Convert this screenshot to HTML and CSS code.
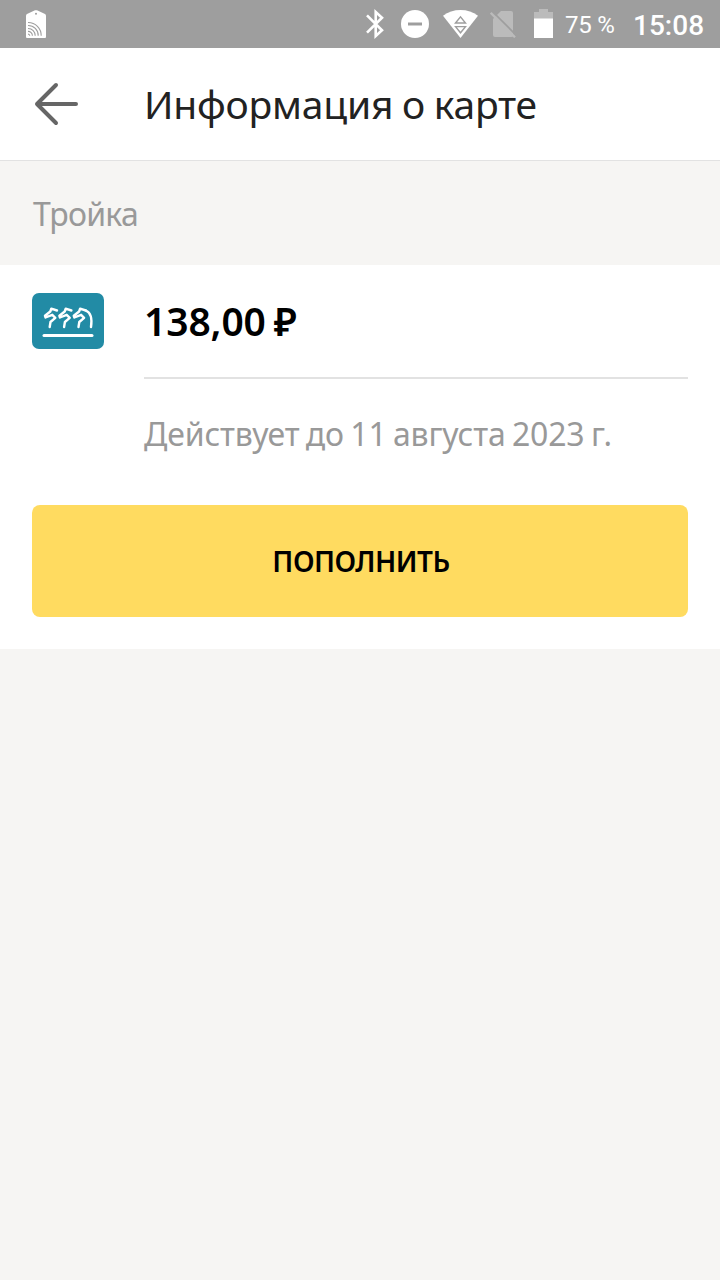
FILE: index.html
```html
<!DOCTYPE html>
<html lang="ru">
<head>
    <meta charset="UTF-8">
    <meta name="viewport" content="width=device-width, initial-scale=1">
    <title>Информация о карте</title>
    <link rel="stylesheet" href="styles.css">
</head>
<body>
<div class="statusbar">
    <svg class="icon-tag" width="20" height="28" viewBox="0 0 20 28">
        <path d="M0 5.5 Q0 4.5 1 4 L9 .3 Q10 0 11 .3 L19 4 Q20 4.5 20 5.5 V27 Q20 28 19 28 H1 Q0 28 0 27Z" fill="#fff"/>
        <circle cx="10" cy="3.8" r="1" fill="#9e9e9e"/>
        <g fill="none" stroke="#9e9e9e" stroke-width="1.1">
            <path d="M2 12.5 A13 13 0 0 1 15.2 25.8"/>
            <path d="M2 15.5 A10 10 0 0 1 12.2 25.8"/>
            <path d="M2 18.5 A7 7 0 0 1 9.2 25.8"/>
            <path d="M2 21.4 A4.3 4.3 0 0 1 6.4 25.8"/>
            <path d="M2 24 A2 2 0 0 1 3.8 25.8"/>
        </g>
    </svg>
    <div class="status-right">
        <svg class="icon-bt" width="20" height="30" viewBox="0 0 20 30">
            <path d="M2 6.3 L17 21.3 L10.7 27 V3 L17 8.7 L2 23.7" fill="none" stroke="#fff" stroke-width="2.6"/>
        </svg>
        <svg class="icon-dnd" width="28" height="28" viewBox="0 0 28 28">
            <circle cx="14" cy="14" r="14" fill="#fff"/>
            <path d="M7 14 H21" stroke="#9e9e9e" stroke-width="3"/>
        </svg>
        <svg class="icon-wifi" width="35" height="28" viewBox="0 0 35 28">
            <path d="M0 5.8 Q7.5 0 17.5 0 T35 5.8 L17.5 28Z" fill="#fff"/>
            <path d="M12.5 13 L17.5 6.8 L22.5 13Z M12.5 16.6 L17.5 22.8 L22.5 16.6Z" fill="none" stroke="#9e9e9e" stroke-width="1.4"/>
        </svg>
        <svg class="icon-sim" width="26" height="28" viewBox="0 0 26 28">
            <path d="M11 1 H21 Q23 1 23 3 V26 Q23 27 21.5 27 H5 Q3 27 3 25 V9Z" fill="#bbb"/>
            <path d="M2.3 1.3 L26 25" stroke="#9e9e9e" stroke-width="1.8"/>
            <path d="M.7 2.7 L25 27.3" stroke="#bbb" stroke-width="2.3"/>
        </svg>
        <svg class="icon-battery" width="19" height="29" viewBox="0 0 19 29">
            <path d="M0 3 H5 V0 H14 V3 H19 V10 H0Z" fill="#bbb"/>
            <path d="M0 9.5 H19 V29 H0Z" fill="#fff"/>
        </svg>
        <span class="percent">75 %</span>
        <span class="clock">15:08</span>
    </div>
</div>

<header class="toolbar">
    <svg class="back" width="44" height="44" viewBox="0 0 44 44">
        <path d="M22 3 L3 22 L22 41 M3 22 H42" fill="none" stroke="#666" stroke-width="4" stroke-linecap="round" stroke-linejoin="round"/>
    </svg>
    <h1 class="title"><span>Информация о карте</span></h1>
</header>

<div class="section-name"><span>Тройка</span></div>

<main class="card">
    <div class="row">
        <svg class="logo" width="72" height="56" viewBox="0 0 72 56">
            <rect width="72" height="56" rx="7" fill="#228ba5"/>
            <g fill="none" stroke="#fff" stroke-width="2.4" stroke-linecap="round" stroke-linejoin="round">
                <path id="horse" d="M25 17.5 L19.300 15.700 L18.300 18.500 L13 22.800 L13.500 24.500 L20.300 21.800 L23.300 24.800 L18.500 29 L17.700 34"/>
                <use href="#horse" x="14.4"/>
                <use href="#horse" x="28.8"/>
                <path d="M53.8 17.5 Q61 20.5 59 34"/>
            </g>
            <path d="M12 42.5 H60" stroke="#fff" stroke-width="3" stroke-linecap="round"/>
        </svg>
        <div class="info">
            <div class="balance"><span>138,00 ₽</span></div>
            <div class="expires"><span>Действует до 11 августа 2023 г.</span></div>
        </div>
    </div>
    <button class="btn" type="button">ПОПОЛНИТЬ</button>
</main>
</body>
</html>
```

FILE: styles.css
```css
* {
    box-sizing: border-box;
}
body {
    margin: 0;
    min-height: 1280px;
    background: #f6f5f3;
    font-family: "Noto Sans", sans-serif;
    color: #000;
}
svg {
    display: block;
    flex: none;
}

/* status bar */
.statusbar {
    display: flex;
    align-items: center;
    justify-content: space-between;
    height: 48px;
    padding: 0 16px 0 26px;
    background: #9e9e9e;
    color: #fff;
    font-family: Roboto, sans-serif;
    white-space: nowrap;
}
.status-right {
    display: flex;
    align-items: center;
}
.icon-bt {
    margin-right: 16px;
}
.icon-dnd {
    margin-right: 14px;
}
.icon-wifi {
    margin-right: 12px;
}
.icon-sim {
    margin-right: 18px;
}
.icon-battery {
    margin-bottom: 1px;
}
.percent {
    margin-left: 12px;
    width: 50px;
    font-size: 24px;
    line-height: 48px;
    padding-top: 1px;
    letter-spacing: -0.2px;
}
.clock {
    margin-left: 18px;
    width: 71px;
    font-size: 28px;
    line-height: 48px;
    font-weight: 500;
    padding-top: 3px;
}

/* toolbar */
.toolbar {
    display: flex;
    align-items: center;
    height: 113px;
    padding: 0 34px;
    background: #fff;
    border-bottom: 1px solid #e2e2e2;
}
.title {
    margin: 0 0 0 66px;
    font-size: 39px;
    font-weight: 400;
    line-height: 56px;
    letter-spacing: -0.2px;
    word-spacing: -1.2px;
    color: #222;
    white-space: nowrap;
}

.section-name {
    height: 104px;
    padding: 1px 32px 0 33px;
    font-size: 32px;
    line-height: 104px;
    letter-spacing: -0.7px;
    color: #999;
}

/* card */
.card {
    height: 384px;
    padding: 0 32px 32px;
    background: #fff;
}
.row {
    display: flex;
    height: 240px;
    gap: 40px;
}
.logo {
    margin-top: 28px;
}
.info {
    flex: 1;
    white-space: nowrap;
}
.balance {
    height: 114px;
    border-bottom: 2px solid #e2e2e2;
    font-size: 39px;
    font-weight: 600;
    line-height: 112px;
    word-spacing: -2px;
    letter-spacing: -0.1px;
}
.expires {
    font-size: 32px;
    line-height: 110px;
    letter-spacing: -0.15px;
    word-spacing: -1.8px;
    color: #999;
}
.btn {
    display: block;
    width: 100%;
    height: 112px;
    padding: 0 0 0 2px;
    border: 0;
    border-radius: 8px;
    background: #ffdb60;
    font-family: "Noto Sans", sans-serif;
    font-size: 28px;
    font-weight: 600;
    line-height: 112px;
    letter-spacing: -0.5px;
    color: #000;
}
```
